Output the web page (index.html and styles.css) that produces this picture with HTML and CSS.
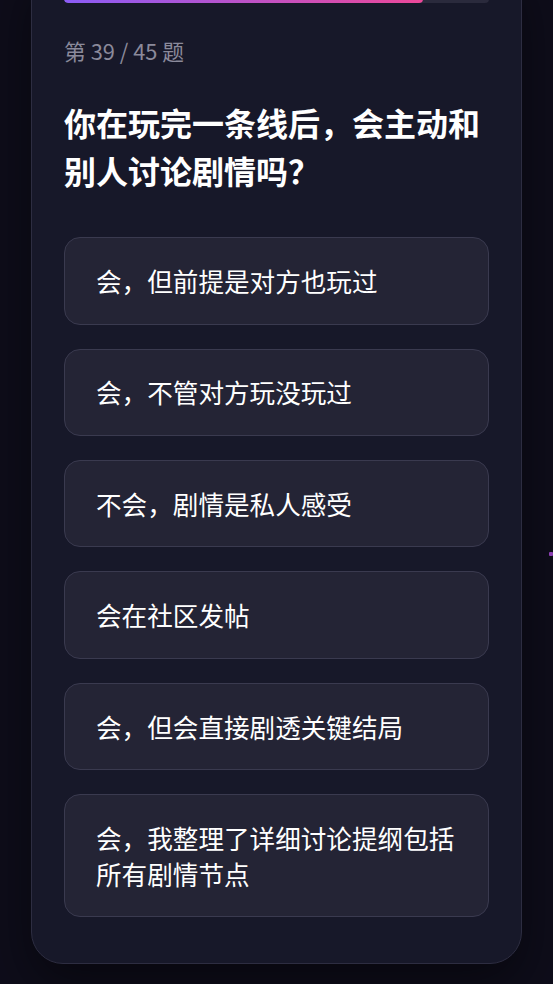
FILE: index.html
```html
<!DOCTYPE html>
<html lang="zh-CN">
<head>
    <meta charset="UTF-8">
    <meta name="viewport" content="width=device-width, initial-scale=1.0">
    <title>剧情测试</title>
    <link rel="stylesheet" href="styles.css">
</head>
<body>
    <div class="particle"></div>
    <div class="container">
        <div class="quiz-card">
            <div class="progress">
                <div class="progress-fill" style="width: 84.4%"></div>
            </div>
            <p class="counter">第 39 / 45 题</p>
            <h2 class="question">你在玩完一条线后，会主动和别人讨论剧情吗？</h2>
            <div class="options">
                <button class="option">会，但前提是对方也玩过</button>
                <button class="option">会，不管对方玩没玩过</button>
                <button class="option">不会，剧情是私人感受</button>
                <button class="option">会在社区发帖</button>
                <button class="option">会，但会直接剧透关键结局</button>
                <button class="option">会，我整理了详细讨论提纲包括所有剧情节点</button>
            </div>
        </div>
    </div>
</body>
</html>
```

FILE: styles.css
```css
* {
    box-sizing: border-box;
}

html,
body {
    margin: 0;
    height: 100%;
}

body {
    background-color: #0e0d1a;
    font-family: "Noto Sans CJK SC", "Noto Sans", sans-serif;
    color: #fff;
    overflow: hidden;
    position: relative;
}

.container {
    padding: 0 31px;
    margin-top: -38px;
}

.quiz-card {
    background-color: #171829;
    border: 1px solid #2d2d41;
    border-radius: 32px;
    padding: 32px 32px 46px;
    box-shadow: 0 20px 50px rgba(0, 0, 0, 0.45);
}

.progress {
    height: 8px;
    border-radius: 4px;
    background-color: #2a2a3c;
    overflow: hidden;
}

.progress-fill {
    height: 100%;
    border-radius: 4px;
    background: linear-gradient(90deg, #8b5cf6, #ec4899);
}

.counter {
    margin: 32px 0 32px;
    font-size: 21.8px;
    line-height: 31.2px;
    color: #8b8a9b;
}

.question {
    margin: 0 0 43px;
    font-size: 32px;
    line-height: 48px;
    font-weight: 700;
}

.options {
    display: flex;
    flex-direction: column;
    gap: 24px;
}

.option {
    display: block;
    width: 100%;
    text-align: left;
    font-family: inherit;
    font-size: 25.6px;
    line-height: 35.8px;
    color: #fff;
    background-color: #242435;
    border: 1px solid #3a3a4f;
    border-radius: 16px;
    padding: 24.8px 31px;
    cursor: pointer;
}

.particle {
    position: absolute;
    left: 549px;
    top: 552px;
    width: 4px;
    height: 4px;
    border-radius: 1px;
    background-color: #8b3fb3;
}
```
